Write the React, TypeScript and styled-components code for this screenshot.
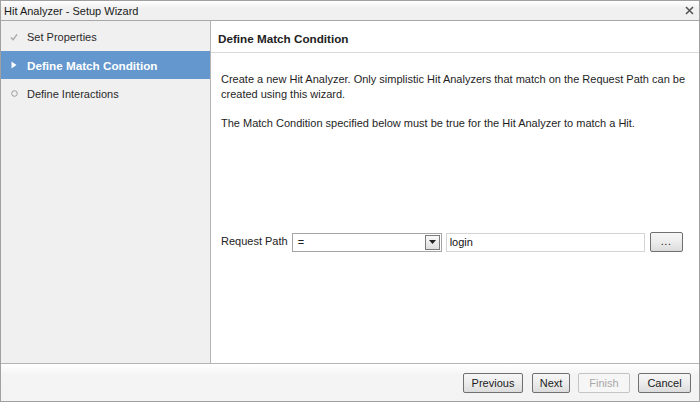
import styled, { createGlobalStyle } from "styled-components";

const GlobalStyle = createGlobalStyle`
  html, body {
    margin: 0;
    padding: 0;
    background: #ffffff;
  }
  body {
    font-family: "Liberation Sans", Arial, sans-serif;
    font-size: 11px;
    color: #222;
  }
`;

const Window = styled.div`
  width: 700px;
  height: 402px;
  box-sizing: border-box;
  border: 1px solid #a0a0a0;
  display: flex;
  flex-direction: column;
  background: #fff;
`;

const TitleBar = styled.div`
  height: 19px;
  flex: none;
  display: flex;
  align-items: center;
  justify-content: space-between;
  padding: 0 4px 0 3px;
  background: linear-gradient(#ffffff, #f0f0f0 40%, #f0f0f0);
  border-bottom: 1px solid #a8a8a8;
  font-size: 11px;
  color: #1a1a1a;
`;

const CloseButton = styled.button`
  border: 0;
  background: none;
  padding: 0;
  width: 12px;
  height: 12px;
  display: flex;
  align-items: center;
  justify-content: center;
  cursor: pointer;
`;

const Main = styled.div`
  flex: 1;
  display: flex;
  min-height: 0;
`;

const Sidebar = styled.ul`
  width: 209px;
  flex: none;
  margin: 0;
  padding: 1px 0 0;
  list-style: none;
  background: #f0f0f0;
  border-right: 1px solid #b4b4b4;
`;

const Step = styled.li<{ $active?: boolean }>`
  height: ${(p) => (p.$active ? "28px" : "29px")};
  display: flex;
  align-items: center;
  gap: 9px;
  padding-left: 9px;
  font-size: ${(p) => (p.$active ? "11.7px" : "11px")};
  font-weight: ${(p) => (p.$active ? "bold" : "normal")};
  color: ${(p) => (p.$active ? "#ffffff" : "#2a2a2a")};
  background: ${(p) => (p.$active ? "#6397cd" : "transparent")};
`;

const StepIcon = styled.span`
  width: 8px;
  height: 8px;
  display: flex;
  align-items: center;
  justify-content: center;
`;

const Content = styled.div`
  flex: 1;
  display: flex;
  flex-direction: column;
`;

const ContentHeader = styled.div`
  height: 27px;
  flex: none;
  display: flex;
  align-items: center;
  padding: 4px 0 0 7px;
  border-bottom: 1px solid #d8d8d8;
  font-weight: bold;
  font-size: 11.7px;
  color: #222;
`;

const Body = styled.div`
  flex: 1;
  display: flex;
  flex-direction: column;
  padding: 19px 10px 0 10px;
`;

const Paragraph = styled.p`
  margin: 0 0 14px;
  line-height: 15px;
  font-size: 11px;
  color: #1e1e1e;
`;

const FieldRow = styled.div`
  margin-top: 87px;
  display: flex;
  align-items: center;
  gap: 4px;
`;

const FieldLabel = styled.span`
  font-size: 11px;
  white-space: nowrap;
  color: #222;
  margin-top: -3px;
`;

const Select = styled.div`
  width: 150px;
  height: 19px;
  box-sizing: border-box;
  display: flex;
  align-items: center;
  justify-content: space-between;
  border: 1px solid #a5a5a5;
  background: #fff;
  padding-left: 5px;
  font-size: 11px;
`;

const SelectArrow = styled.span`
  width: 15px;
  height: 15px;
  box-sizing: border-box;
  border: 1px solid #7a7a7a;
  background: linear-gradient(#fafafa, #dedede);
  display: flex;
  align-items: center;
  justify-content: center;
  margin-right: 1px;
`;

const TextInput = styled.input`
  width: 199px;
  height: 19px;
  box-sizing: border-box;
  border: 1px solid #d4d4d4;
  padding: 0 3px;
  font-family: inherit;
  font-size: 11px;
  color: #111;
  outline: none;
`;

const Footer = styled.div`
  height: 37px;
  flex: none;
  display: flex;
  align-items: center;
  justify-content: flex-end;
  gap: 8px;
  padding-right: 8px;
  border-top: 1px solid #b4b4b4;
  background: linear-gradient(#ffffff, #f4f4f4 30%, #f3f3f3);
`;

const Button = styled.button<{ $width: number }>`
  width: ${(p) => p.$width}px;
  height: 20px;
  box-sizing: border-box;
  border: 1px solid ${(p) => (p.disabled ? "#c4c4c4" : "#707070")};
  border-radius: 2px;
  background: ${(p) =>
    p.disabled ? "#f6f6f6" : "linear-gradient(#f6f6f6, #ececec 50%, #dcdcdc)"};
  color: ${(p) => (p.disabled ? "#a8a8a8" : "#1a1a1a")};
  font-family: inherit;
  font-size: 11px;
  padding: 0;
  display: flex;
  align-items: center;
  justify-content: center;
`;

const PreviousButton = styled(Button)`
  margin-right: 1px;
`;

const EllipsisButton = styled(Button)`
  margin-left: 1px;
  letter-spacing: 0.5px;
  padding-bottom: 2px;
`;

export default function App() {
  return (
    <>
      <GlobalStyle />
      <Window>
        <TitleBar>
          <span>Hit Analyzer - Setup Wizard</span>
          <CloseButton aria-label="Close">
            <svg width="9" height="9" viewBox="0 0 9 9">
              <path d="M1 1 L8 8 M8 1 L1 8" stroke="#555" strokeWidth="1.6" />
            </svg>
          </CloseButton>
        </TitleBar>
        <Main>
          <Sidebar>
            <Step>
              <StepIcon>
                <svg width="9" height="8" viewBox="0 0 9 8">
                  <path d="M1 4.5 L3.5 7 L8 1" fill="none" stroke="#a8a8a8" strokeWidth="1.6" />
                </svg>
              </StepIcon>
              Set Properties
            </Step>
            <Step $active>
              <StepIcon>
                <svg width="6" height="8" viewBox="0 0 6 8">
                  <path d="M0.5 0.5 L5.5 4 L0.5 7.5 Z" fill="#ffffff" />
                </svg>
              </StepIcon>
              Define Match Condition
            </Step>
            <Step>
              <StepIcon>
                <svg width="7" height="7" viewBox="0 0 7 7">
                  <circle cx="3.5" cy="3.5" r="2.8" fill="none" stroke="#9a9a9a" strokeWidth="1" />
                </svg>
              </StepIcon>
              Define Interactions
            </Step>
          </Sidebar>
          <Content>
            <ContentHeader>Define Match Condition</ContentHeader>
            <Body>
              <Paragraph>
                Create a new Hit Analyzer. Only simplistic Hit Analyzers that match on the
                Request Path can be created using this wizard.
              </Paragraph>
              <Paragraph>
                The Match Condition specified below must be true for the Hit Analyzer to match
                a Hit.
              </Paragraph>
              <FieldRow>
                <FieldLabel>Request Path</FieldLabel>
                <Select>
                  <span>=</span>
                  <SelectArrow>
                    <svg width="7" height="4" viewBox="0 0 7 4">
                      <path d="M0 0 L7 0 L3.5 4 Z" fill="#222" />
                    </svg>
                  </SelectArrow>
                </Select>
                <TextInput defaultValue="login" />
                <EllipsisButton $width={33}>...</EllipsisButton>
              </FieldRow>
            </Body>
          </Content>
        </Main>
        <Footer>
          <PreviousButton $width={60}>Previous</PreviousButton>
          <Button $width={38}>Next</Button>
          <Button $width={52} disabled>
            Finish
          </Button>
          <Button $width={53}>Cancel</Button>
        </Footer>
      </Window>
    </>
  );
}
